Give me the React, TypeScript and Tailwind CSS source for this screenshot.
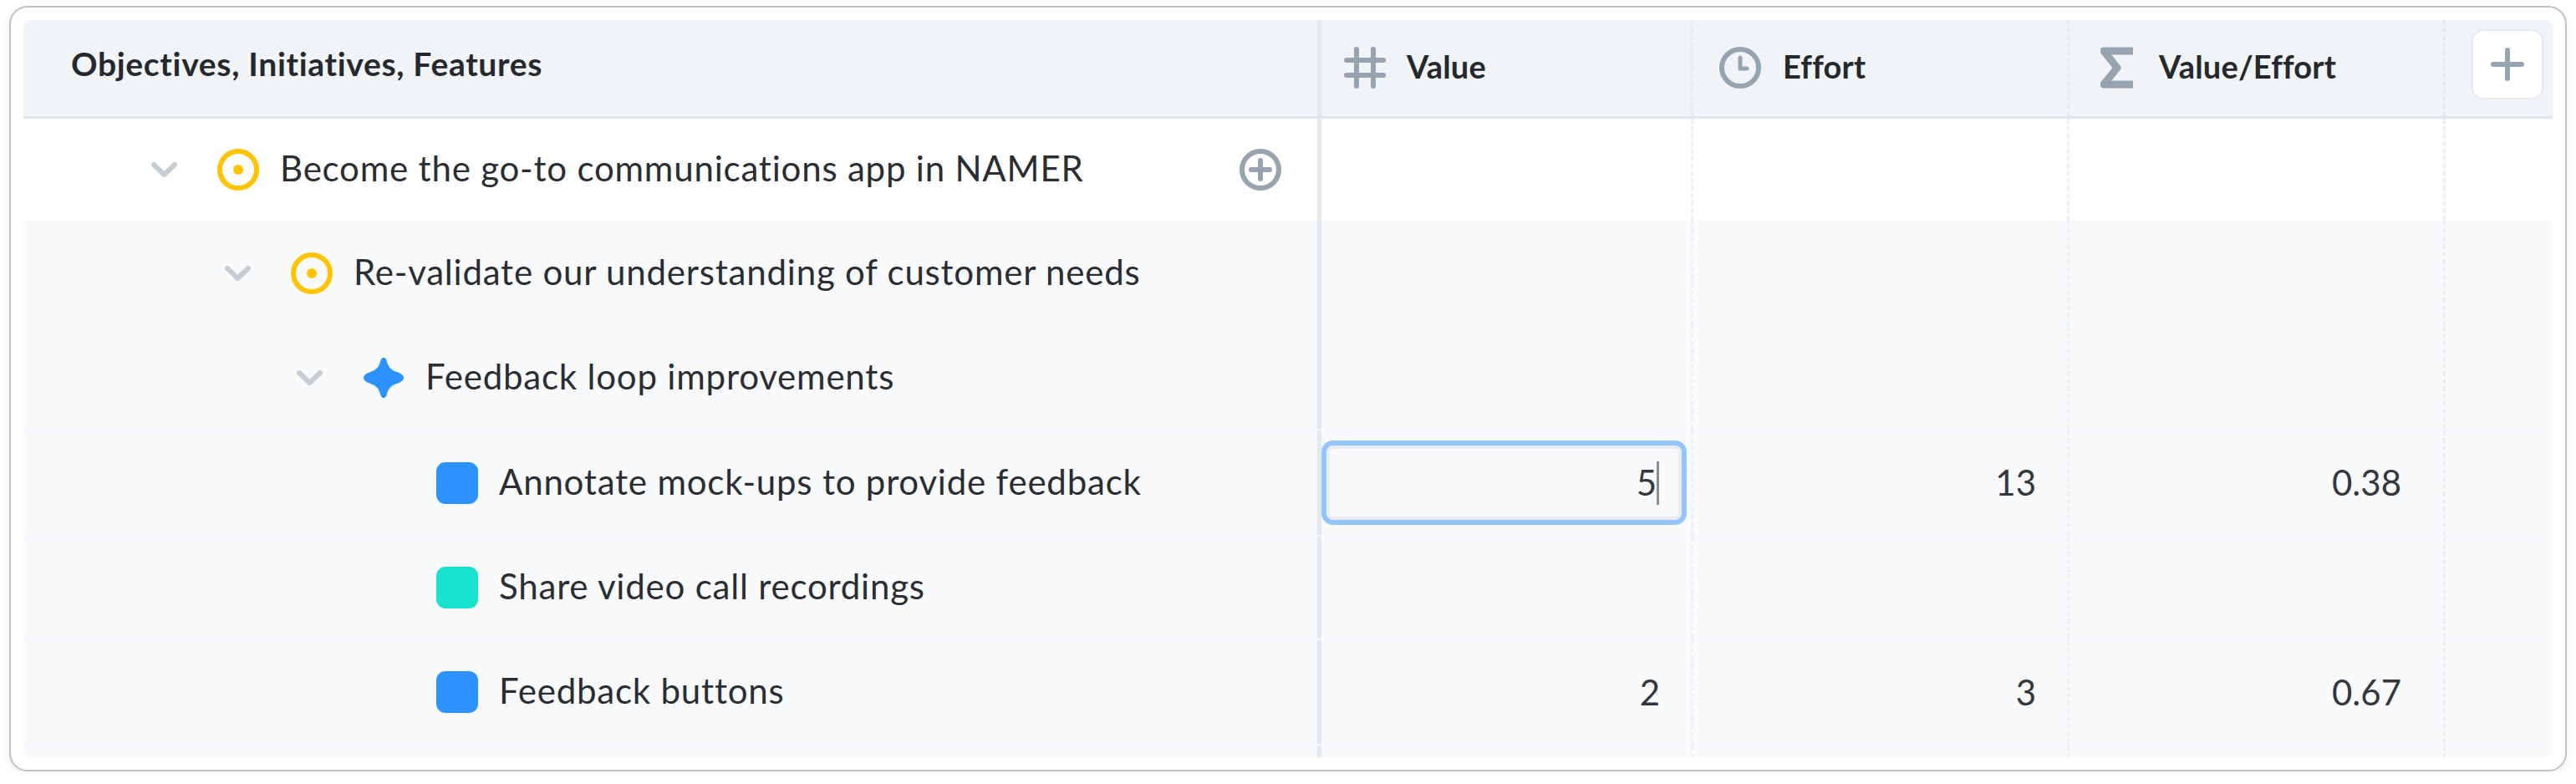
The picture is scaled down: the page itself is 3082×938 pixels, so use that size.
import type { ReactNode } from "react";

type RowData = {
  label: string;
  indent: string;
  icon: "target" | "star" | "blue" | "teal";
  chevron?: boolean;
  value?: string;
  effort?: string;
  ratio?: string;
  editing?: boolean;
  rowClass: string;
};

const rows: RowData[] = [
  { label: "Become the go-to communications app in NAMER", indent: "pl-[153px]", icon: "target", chevron: true, rowClass: "h-[122px] bg-white" },
  { label: "Re-validate our understanding of customer needs", indent: "pl-[241px]", icon: "target", chevron: true, rowClass: "h-[126px] bg-[#f8fafc]" },
  { label: "Feedback loop improvements", indent: "pl-[327px]", icon: "star", chevron: true, rowClass: "h-[125px] bg-[#f8fafc] border-b-2 border-[#f6f8fb]" },
  { label: "Annotate mock-ups to provide feedback", indent: "pl-[494px]", icon: "blue", value: "5", effort: "13", ratio: "0.38", editing: true, rowClass: "h-[127px] bg-[#f8fafc] border-b-2 border-[#f6f8fb]" },
  { label: "Share video call recordings", indent: "pl-[494px]", icon: "teal", rowClass: "h-[124px] bg-[#f8fafc] border-b-2 border-[#f6f8fb]" },
  { label: "Feedback buttons", indent: "pl-[494px]", icon: "blue", value: "2", effort: "3", ratio: "0.67", rowClass: "h-[126px] bg-[#f8fafc] border-b-2 border-[#f6f8fb]" },
];

function Chevron() {
  return (
    <svg width="31" height="18" viewBox="0 0 31 18" fill="none" className="shrink-0">
      <path d="M3 3l12.5 12L28 3" stroke="#c6cdd5" strokeWidth="6" strokeLinecap="round" strokeLinejoin="round" />
    </svg>
  );
}

function RowIcon({ icon }: { icon: RowData["icon"] }) {
  if (icon === "target") {
    return (
      <svg width="50" height="50" viewBox="0 0 50 50" fill="none" className="shrink-0">
        <circle cx="25" cy="25" r="22" stroke="#ffc400" strokeWidth="6" />
        <circle cx="25" cy="25" r="6" fill="#ffc400" />
      </svg>
    );
  }
  if (icon === "star") {
    return (
      <svg width="50" height="50" viewBox="0 0 50 50" className="shrink-0">
        <path
          d="M25 1c2.600 0 3.400 2.400 4.200 5.500 1.300 5 4.800 9 10.300 11 3 1.100 9.500 3.300 9.500 7.500s-6.500 6.400-9.500 7.500c-5.500 2-9 6-10.300 11-.8 3.100-1.600 5.500-4.200 5.500s-3.400-2.400-4.200-5.500c-1.300-5-4.800-9-10.300-11C7.500 31.400 1 29.200 1 25s6.500-6.400 9.500-7.500c5.500-2 9-6 10.300-11C21.600 3.400 22.400 1 25 1z"
          fill="#2b92ff"
        />
      </svg>
    );
  }
  return (
    <div className={`h-[50px] w-[50px] shrink-0 rounded-[11px] ${icon === "blue" ? "bg-[#2b92ff]" : "bg-[#19e3cf]"}`} />
  );
}

function HashIcon() {
  return (
    <svg width="50" height="50" viewBox="0 0 50 50" fill="none" stroke="#97a3af" strokeWidth="6" strokeLinecap="round">
      <path d="M15 3v44M35 3v44M3 16h44M3 34h44" />
    </svg>
  );
}

function ClockIcon() {
  return (
    <svg width="50" height="50" viewBox="0 0 50 50" fill="none" stroke="#97a3af">
      <circle cx="25" cy="25" r="22" strokeWidth="6" />
      <path d="M25 13v13h8" strokeWidth="5" strokeLinecap="round" strokeLinejoin="round" />
    </svg>
  );
}

function SigmaIcon() {
  return (
    <svg width="40" height="50" viewBox="0 0 40 50" fill="none" stroke="#97a3af" strokeWidth="9" strokeLinejoin="round">
      <path d="M39 5H4l16 20L4 45h35" />
    </svg>
  );
}

function HeaderCell({ icon, title, className }: { icon: ReactNode; title: string; className: string }) {
  return (
    <div className={`flex h-full shrink-0 items-center border-r-[3px] border-dashed border-[#e6eaee] pb-[1px] ${className}`}>
      <span className="flex w-[50px] shrink-0 justify-center">{icon}</span>
      <span className="mt-[-4px] text-[38px] font-bold tracking-[0.2px]">{title}</span>
    </div>
  );
}

function NumCell({ text, width, pad }: { text?: string; width: string; pad: string }) {
  return (
    <div className={`flex h-full shrink-0 items-center justify-end border-r-[3px] border-dashed border-[#eceff3] text-[#34383d] ${width} ${pad}`}>
      {text}
    </div>
  );
}

function Row({ row }: { row: RowData }) {
  return (
    <div className={`flex text-[#2a2e33] ${row.rowClass}`}>
      <div className={`flex h-full w-[1553px] shrink-0 items-center border-r-[5px] border-[#e4e8ec] ${row.indent}`}>
        {row.chevron && (
          <span className="mr-[48px]">
            <Chevron />
          </span>
        )}
        <RowIcon icon={row.icon} />
        <span className="ml-[25px] mt-[-3px] tracking-[0.8px]">{row.label}</span>
        {row.label.startsWith("Become") && (
          <svg width="50" height="50" viewBox="0 0 50 50" fill="none" stroke="#97a3af" strokeWidth="6" className="ml-auto mr-[43px]">
            <circle cx="25" cy="25" r="22" />
            <path d="M25 14v22M14 25h22" strokeLinecap="round" />
          </svg>
        )}
      </div>
      {row.editing ? (
        <div className="flex h-full w-[445px] shrink-0 items-center border-r-[3px] border-dashed border-[#eceff3] text-[#34383d]">
          <div className="flex h-[101px] w-[437px] items-center justify-end rounded-[14px] border-[6px] border-[#93c5fb] pr-[27px] shadow-[inset_0_0_0_4px_#e9ecf1]">
            {row.value}
            <span className="h-[52px] w-[3px] bg-[#8a8d91]" />
          </div>
        </div>
      ) : (
        <NumCell text={row.value} width="w-[445px]" pad="pr-[37px]" />
      )}
      <NumCell text={row.effort} width="w-[450px]" pad="pr-[37px]" />
      <NumCell text={row.ratio} width="w-[450px]" pad="pr-[50px]" />
    </div>
  );
}

export default function App() {
  return (
    <div className="pl-[11px] pt-[7px] font-['Lato',sans-serif] text-[42px]">
      <div className="h-[916px] w-[3060px] rounded-[22px] border-2 border-[#c2c2c2] bg-white p-[15px] shadow-[0_4px_10px_rgba(0,0,0,0.08)]">
        <div className="h-[882px] w-[3026px] overflow-hidden rounded-[10px] bg-[#f8fafc]">
          {/* Header */}
          <div className="flex h-[118px] border-b-[3px] border-[#e3e7eb] bg-[#f0f4f7] text-[#25292e]">
            <div className="flex h-full w-[1553px] shrink-0 items-center border-r-[5px] border-[#e4e8ec] pb-[10px] pl-[57px] text-[39px] font-bold tracking-[0.7px]">
              Objectives, Initiatives, Features
            </div>
            <HeaderCell icon={<HashIcon />} title="Value" className="w-[445px] gap-[25px] pl-[27px]" />
            <HeaderCell icon={<ClockIcon />} title="Effort" className="w-[450px] gap-[26px] pl-[31px]" />
            <HeaderCell icon={<SigmaIcon />} title="Value/Effort" className="w-[450px] gap-[25px] pl-[32px]" />
            <div className="flex flex-1 items-start justify-end pr-[11px] pt-[11px]">
              <button className="flex h-[84px] w-[86px] items-center justify-center rounded-[14px] border-2 border-[#e6eaee] bg-white">
                <svg width="40" height="40" viewBox="0 0 40 40" fill="none" stroke="#97a3af" strokeWidth="6" strokeLinecap="round">
                  <path d="M20 3v34M3 20h34" />
                </svg>
              </button>
            </div>
          </div>
          {rows.map((row) => (
            <Row key={row.label} row={row} />
          ))}
          {/* Leftover strip below the last row, dividers keep running */}
          <div className="flex h-[15px] bg-[#f8fafc]">
            <div className="w-[1553px] shrink-0 border-r-[5px] border-[#e4e8ec]" />
            <div className="w-[445px] shrink-0 border-r-[3px] border-dashed border-[#eceff3]" />
            <div className="w-[450px] shrink-0 border-r-[3px] border-dashed border-[#eceff3]" />
            <div className="w-[450px] shrink-0 border-r-[3px] border-dashed border-[#eceff3]" />
          </div>
        </div>
      </div>
    </div>
  );
}
